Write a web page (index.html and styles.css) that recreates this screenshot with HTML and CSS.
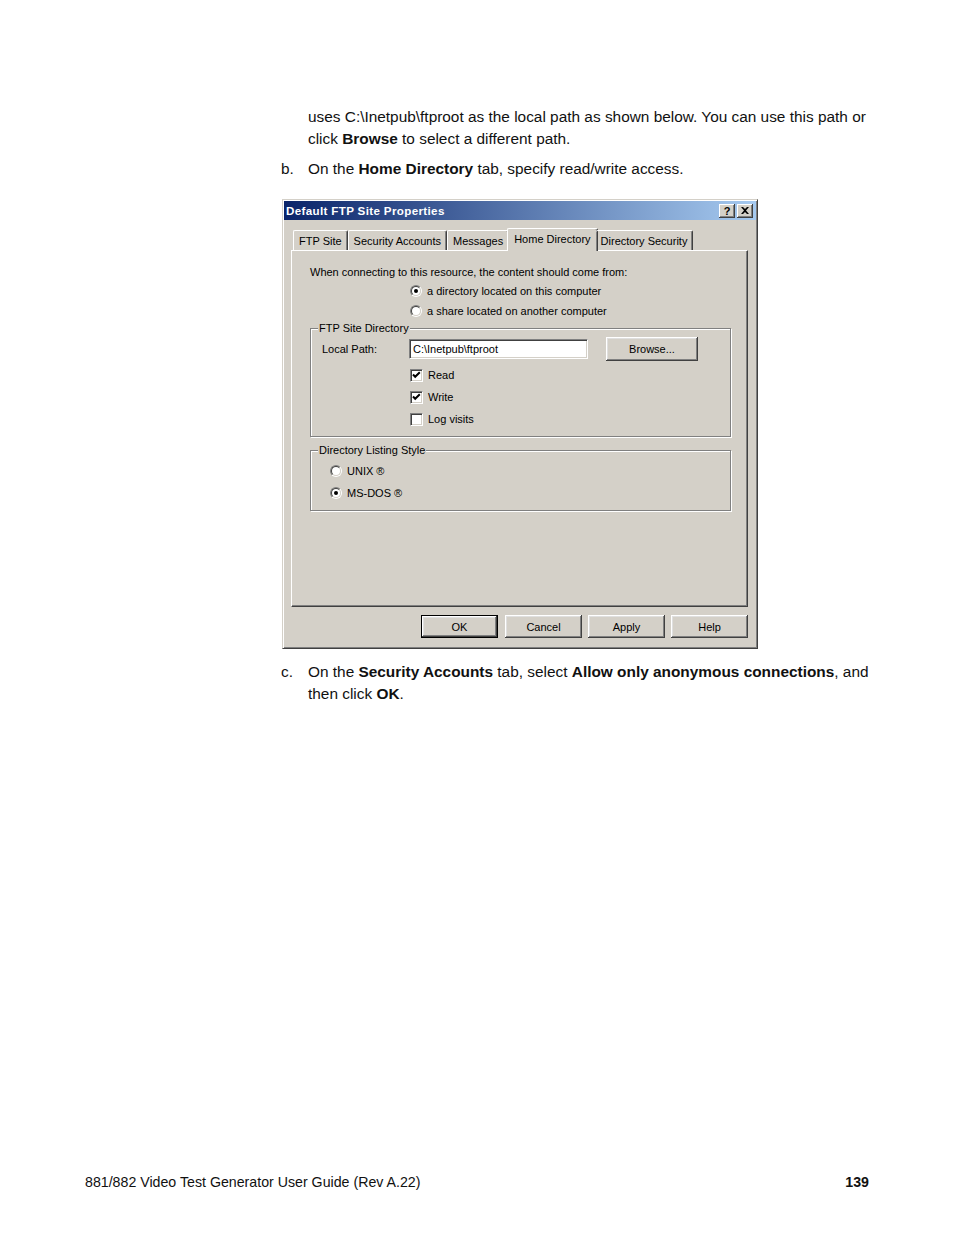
FILE: index.html
```html
<!DOCTYPE html>
<html lang="en">
<head>
  <meta charset="UTF-8">
  <title>881/882 Video Test Generator User Guide - page 139</title>
  <link rel="stylesheet" href="styles.css">
</head>
<body>
  <div class="page">
    <p class="text">uses C:\Inetpub\ftproot as the local path as shown below. You can use this path or click <b>Browse</b> to select a different path.</p>

    <div class="step">
      <span class="step__mark">b.</span>
      <p class="step__text">On the <b>Home Directory</b> tab, specify read/write access.</p>
    </div>

    <!-- Default FTP Site Properties dialog -->
    <div class="dialog">
      <div class="dialog__title">
        <span class="dialog__caption">Default FTP Site Properties</span>
        <span class="dialog__ctl">?</span>
        <span class="dialog__ctl">
          <svg width="8" height="7" viewBox="0 0 8 7"><path d="M0 0h2l2 2 2-2h2L5 3.5 8 7H6L4 5 2 7H0l3-3.5z" fill="#000"/></svg>
        </span>
      </div>

      <div class="dialog__body">
        <div class="tabs">
          <span class="tab">FTP Site</span>
          <span class="tab">Security Accounts</span>
          <span class="tab">Messages</span>
          <span class="tab tab--active">Home Directory</span>
          <span class="tab">Directory Security</span>
        </div>

        <div class="panel">
          <div class="panel__line">When connecting to this resource, the content should come from:</div>
          <div class="options">
            <label class="option"><span class="radio radio--on"></span>a directory located on this computer</label>
            <label class="option"><span class="radio"></span>a share located on another computer</label>
          </div>

          <div class="group">
            <div class="group__title">FTP Site Directory</div>
            <div class="path-row">
              <span class="path-row__label">Local Path:</span>
              <span class="field">C:\Inetpub\ftproot</span>
              <span class="btn btn--browse">Browse...</span>
            </div>
            <div class="checks">
              <label class="check-row"><span class="check check--on"><svg width="9" height="9" viewBox="0 0 9 9"><path d="M1 3.5l2.2 2.3L7.8 1.2" fill="none" stroke="#000" stroke-width="2"/></svg></span>Read</label>
              <label class="check-row"><span class="check check--on"><svg width="9" height="9" viewBox="0 0 9 9"><path d="M1 3.5l2.2 2.3L7.8 1.2" fill="none" stroke="#000" stroke-width="2"/></svg></span>Write</label>
              <label class="check-row"><span class="check"></span>Log visits</label>
            </div>
          </div>

          <div class="group group--listing">
            <div class="group__title">Directory Listing Style</div>
            <div class="listing">
              <label class="option"><span class="radio"></span>UNIX ®</label>
              <label class="option"><span class="radio radio--on"></span>MS-DOS ®</label>
            </div>
          </div>
        </div>

        <div class="buttons">
          <span class="btn btn--default">OK</span>
          <span class="btn">Cancel</span>
          <span class="btn">Apply</span>
          <span class="btn">Help</span>
        </div>
      </div>
    </div>

    <div class="step step--after">
      <span class="step__mark">c.</span>
      <p class="step__text">On the <b>Security Accounts</b> tab, select <b>Allow only anonymous connections</b>, and then click <b>OK</b>.</p>
    </div>

    <div class="footer">
      <span>881/882 Video Test Generator User Guide (Rev A.22)</span>
      <b>139</b>
    </div>
  </div>
</body>
</html>
```

FILE: styles.css
```css
/* ====== page ====== */
html, body {
  margin: 0;
  background: #fff;
}

.page {
  box-sizing: border-box;
  width: 954px;
  min-height: 1235px;
  padding: 106px 0 42px;
  display: flex;
  flex-direction: column;
  font-family: "Liberation Sans", Arial, sans-serif;
  font-size: 15.4px;
  line-height: 22px;
  color: #111;
}

.text {
  margin: 0 0 0 308px;
  width: 566px;
}

.step {
  display: flex;
  margin: 8px 0 0 281px;
}

.step--after { margin-top: 12px; }

.step__mark { width: 27px; flex: none; }

.step__text {
  margin: 0;
  width: 566px;
}

.footer {
  margin: auto 0 0 85px;
  width: 784px;
  display: flex;
  justify-content: space-between;
  font-size: 14.2px;
}

/* ====== dialog ====== */
.dialog {
  box-sizing: border-box;
  width: 476px;
  height: 450px;
  margin: 19px 0 0 282px;
  padding: 1px;
  background: #d4d0c8;
  border: 1px solid;
  border-color: #d4d0c8 #404040 #404040 #d4d0c8;
  box-shadow: inset 1px 1px #fff, inset -1px -1px #808080;
  font-family: "Liberation Sans", Arial, sans-serif;
  font-size: 11px;
  line-height: 14px;
  color: #000;
}

.dialog__title {
  height: 19px;
  display: flex;
  align-items: center;
  gap: 2px;
  padding: 0 3px 0 2px;
  background: linear-gradient(to right, #0a246a, #a6caf0);
}

.dialog__caption {
  flex: 1;
  color: #fff;
  font-weight: bold;
  font-size: 11.6px;
  letter-spacing: 0.35px;
}

.dialog__ctl {
  box-sizing: border-box;
  width: 16px;
  height: 14px;
  display: flex;
  align-items: center;
  justify-content: center;
  background: #d4d0c8;
  box-shadow: inset -1px -1px #404040, inset 1px 1px #fff, inset -2px -2px #808080;
  font-weight: bold;
  font-size: 11px;
}

.dialog__body {
  padding: 8px 8px 0 7px;
}

/* tabs */
.tabs {
  display: flex;
  align-items: flex-end;
  height: 22px;
  padding-left: 2px;
  position: relative;
  z-index: 1;
}

.tab {
  box-sizing: border-box;
  height: 20px;
  padding: 3px 5px 0;
  border-top: 1px solid #fff;
  border-left: 1px solid #fff;
  border-right: 1px solid #404040;
  border-radius: 2px 2px 0 0;
  box-shadow: inset -1px 0 #808080;
  white-space: nowrap;
}

.tab--active {
  height: 23px;
  margin: 0 -2px -1px;
  padding: 3px 6px 0;
  background: #d4d0c8;
}

.tab--active + .tab { border-left: 0; }

/* tab panel */
.panel {
  box-sizing: border-box;
  height: 357px;
  padding: 14px 15px 0 18px;
  border: 1px solid;
  border-color: #fff #404040 #404040 #fff;
  box-shadow: inset -1px -1px #808080;
}

.panel__line { height: 14px; }

.options { margin: 2px 0 0 100px; }

.option {
  height: 20px;
  display: flex;
  align-items: center;
  gap: 5px;
}

.radio {
  box-sizing: border-box;
  position: relative;
  width: 12px;
  height: 12px;
  border-radius: 50%;
  border: 1px solid;
  border-color: #808080 #fff #fff #808080;
}

.radio::before {
  content: '';
  position: absolute;
  inset: 0;
  border-radius: 50%;
  border: 1px solid;
  border-color: #404040 #d4d0c8 #d4d0c8 #404040;
  background: #fff;
}

.radio--on::after {
  content: '';
  position: absolute;
  left: 3px;
  top: 3px;
  width: 4px;
  height: 4px;
  border-radius: 50%;
  background: #000;
}

/* group boxes */
.group {
  margin-top: 7px;
  width: 419px;
  border: 1px solid #808080;
  box-shadow: inset 1px 1px #fff, 1px 1px #fff;
  padding-bottom: 6px;
}

.group--listing { margin-top: 13px; }

.group__title {
  display: table;
  margin: -8px 0 0 7px;
  padding: 0 1px;
  background: #d4d0c8;
}

.path-row {
  height: 24px;
  margin-top: 2px;
  display: flex;
  align-items: center;
  padding-left: 11px;
}

.path-row__label { width: 87px; }

.field {
  box-sizing: border-box;
  width: 179px;
  height: 20px;
  padding: 2px 3px;
  background: #fff;
  border: 1px solid;
  border-color: #808080 #fff #fff #808080;
  box-shadow: inset 1px 1px #404040, inset -1px -1px #d4d0c8;
}

.btn {
  box-sizing: border-box;
  width: 77px;
  height: 23px;
  display: flex;
  align-items: center;
  justify-content: center;
  background: #d4d0c8;
  box-shadow: inset -1px -1px #404040, inset 1px 1px #fff, inset -2px -2px #808080, inset 2px 2px #dfdfdf;
}

.btn--browse {
  width: 92px;
  height: 24px;
  margin-left: 18px;
}

.btn--default {
  border: 1px solid #000;
  margin-right: 1px;
}

.checks {
  margin-top: 3px;
  padding-left: 99px;
}

.check-row {
  height: 22px;
  display: flex;
  align-items: center;
  gap: 5px;
}

.check {
  box-sizing: border-box;
  width: 13px;
  height: 13px;
  display: flex;
  align-items: center;
  justify-content: center;
  background: #fff;
  border: 1px solid;
  border-color: #808080 #fff #fff #808080;
  box-shadow: inset 1px 1px #404040, inset -1px -1px #d4d0c8;
}

.listing {
  margin-top: 3px;
  padding-left: 19px;
}

.listing .option { height: 22px; }

/* bottom buttons */
.buttons {
  display: flex;
  justify-content: flex-end;
  gap: 6px;
  margin-top: 8px;
}
```
